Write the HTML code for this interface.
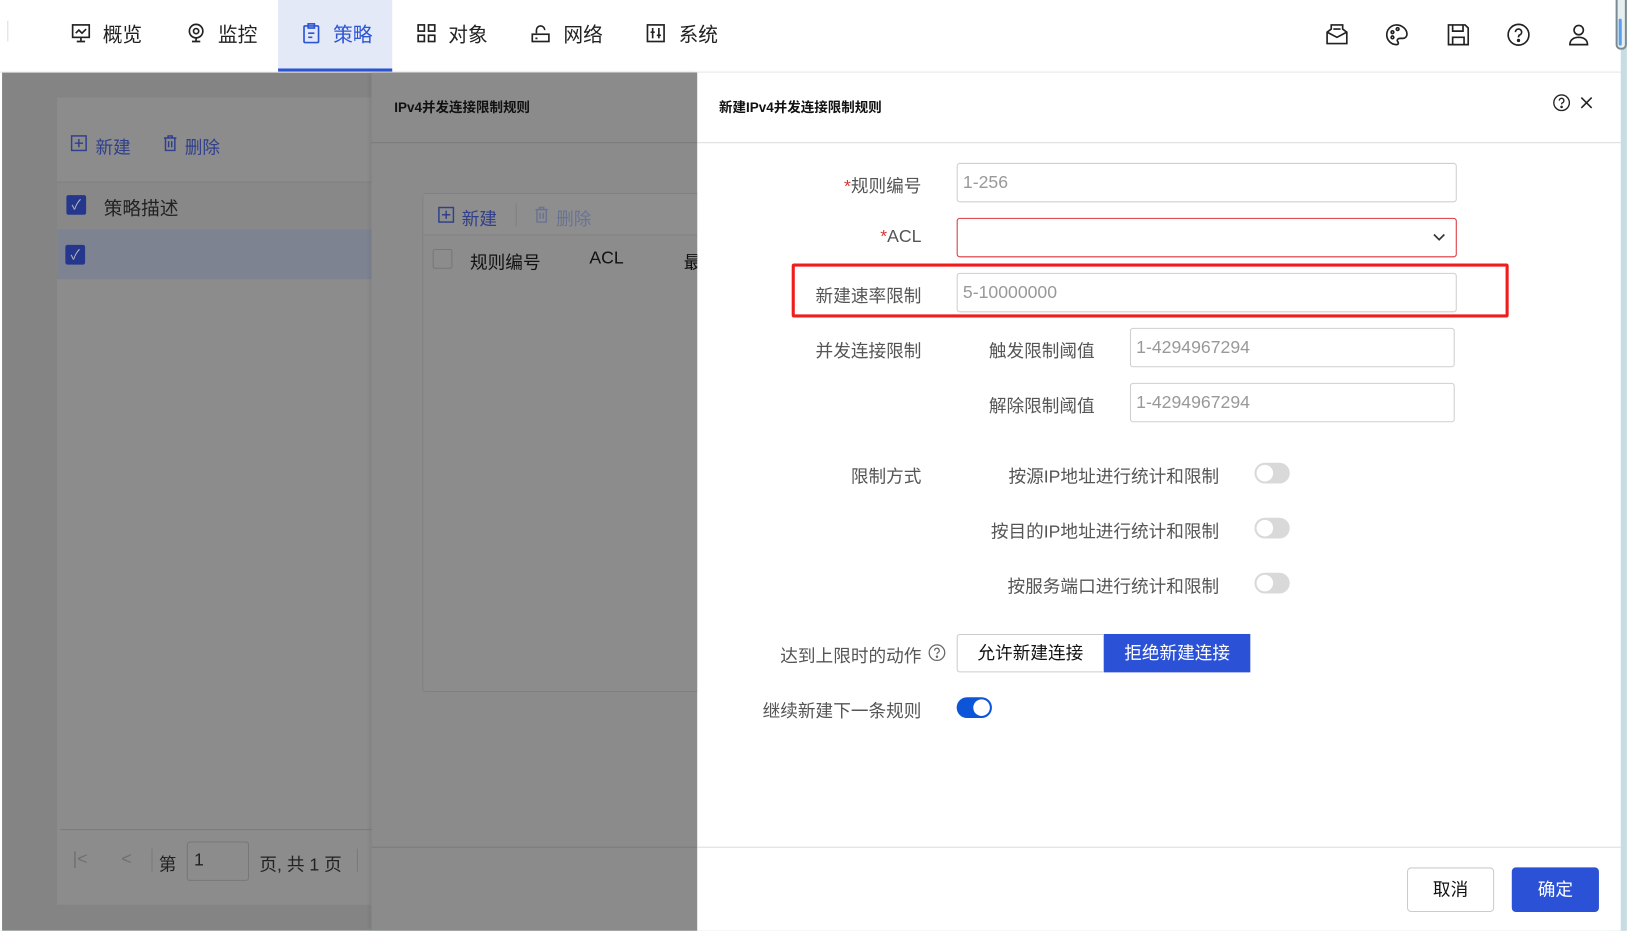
<!DOCTYPE html>
<html><head><meta charset="utf-8"><style>
*{box-sizing:border-box;margin:0;padding:0}
html,body{width:1627px;height:931px;overflow:hidden;background:#c8dde2;font-family:"Liberation Sans","Noto Sans CJK SC",sans-serif}
#w{position:absolute;left:0;top:0;width:1568px;height:897px;transform:scale(1.0376);transform-origin:0 0;background:#fff;overflow:hidden}
.a{position:absolute}
.nav{font-size:19px;color:#222;top:19px}
.ni{position:absolute;top:22px}
.ov{position:absolute;left:2px;top:70px;width:670px;height:827px;background:#848484}
.lbl{position:absolute;font-size:17px;color:#555;text-align:right;white-space:nowrap;margin-top:-1px}
.inp{position:absolute;border:1px solid #cfcfcf;border-radius:3px;background:#fff;font-size:17px;color:#999;padding:8px 5px;line-height:20px}
.tg{position:absolute;width:34px;height:20px;border-radius:10px;background:#d9d9d9}
.tg::after{content:"";position:absolute;left:2px;top:2px;width:16px;height:16px;border-radius:50%;background:#fff}
</style></head><body><div id="w">
<div class="a" style="left:0;top:0;width:1568px;height:70px;background:#fff;border-bottom:1px solid #e4e4e4"></div>
<div class="a" style="left:7px;top:20px;width:1px;height:20px;background:#ddd"></div>
<div class="a" style="left:268px;top:0;width:110px;height:69px;background:#e4e9f8;border-bottom:3px solid #2c55d4"></div>
<svg class="ni" style="left:68px" width="20" height="20" viewBox="0 0 20 20" fill="none" stroke="#222" stroke-width="1.6"><rect x="2" y="2" width="16" height="12"/><path d="M5 10l3-3 3 3 4-4M10 14v4M6 18h8"/></svg>
<div class="a nav" style="left:99px">概览</div>
<svg class="ni" style="left:179px" width="20" height="20" viewBox="0 0 20 20" fill="none" stroke="#222" stroke-width="1.6"><circle cx="10" cy="8" r="6.5"/><circle cx="10" cy="8" r="2.5"/><path d="M10 15v3M6 18h8"/></svg>
<div class="a nav" style="left:210px">监控</div>
<svg class="ni" style="left:290px" width="20" height="20" viewBox="0 0 20 20" fill="none" stroke="#2c55d4" stroke-width="1.6"><rect x="3" y="3" width="14" height="16" rx="1"/><rect x="7" y="1" width="6" height="4"/><path d="M7 10h6M7 14h4"/></svg>
<div class="a nav" style="left:321px;color:#2c55d4">策略</div>
<svg class="ni" style="left:401px" width="20" height="20" viewBox="0 0 20 20" fill="none" stroke="#222" stroke-width="1.6"><rect x="2" y="2" width="6" height="6"/><rect x="12" y="2" width="6" height="6"/><rect x="2" y="12" width="6" height="6"/><rect x="12" y="12" width="6" height="6"/></svg>
<div class="a nav" style="left:432px">对象</div>
<svg class="ni" style="left:511px" width="20" height="20" viewBox="0 0 20 20" fill="none" stroke="#222" stroke-width="1.6"><path d="M6 10V7a4 4 0 0 1 8 0"/><rect x="2" y="11" width="16" height="7"/><path d="M5 15h2"/></svg>
<div class="a nav" style="left:543px">网络</div>
<svg class="ni" style="left:622px" width="20" height="20" viewBox="0 0 20 20" fill="none" stroke="#222" stroke-width="1.6"><rect x="2" y="2" width="16" height="16"/><path d="M7 5v10M13 5v10M5 9h4M11 12h4"/></svg>
<div class="a nav" style="left:654px">系统</div>
<svg class="a" style="left:1277px;top:22px" width="23" height="23" viewBox="0 0 23 23" fill="none" stroke="#222" stroke-width="1.6"><path d="M2 9l4-3V2h11v4l4 3v11H2z"/><path d="M2 9l9.5 5L21 9M8 6h7"/></svg>
<svg class="a" style="left:1335px;top:22px" width="23" height="23" viewBox="0 0 23 23" fill="none" stroke="#222" stroke-width="1.6"><path d="M11 2a9 9 0 1 0 0 19c2 0 2-2 1-3s0-3 2-3h3a4 4 0 0 0 4-4C21 6 16 2 11 2z"/><circle cx="7" cy="9" r="1.3"/><circle cx="12" cy="6" r="1.3"/><circle cx="7" cy="14" r="1.3"/></svg>
<svg class="a" style="left:1394px;top:22px" width="23" height="23" viewBox="0 0 23 23" fill="none" stroke="#222" stroke-width="1.6"><path d="M2 2h16l3 3v16H2z"/><path d="M6 2v6h10V2M6 21v-7h11v7"/></svg>
<svg class="a" style="left:1452px;top:22px" width="23" height="23" viewBox="0 0 23 23" fill="none" stroke="#222" stroke-width="1.6"><circle cx="11.5" cy="11.5" r="10"/><path d="M8.5 9a3 3 0 1 1 4 2.8c-1 .4-1 1-1 2.2"/><circle cx="11.5" cy="17" r=".8" fill="#222"/></svg>
<svg class="a" style="left:1510px;top:22px" width="23" height="23" viewBox="0 0 23 23" fill="none" stroke="#222" stroke-width="1.6"><circle cx="11.5" cy="7" r="4.5"/><path d="M3 21c0-5 4-7 8.5-7s8.5 2 8.5 7z"/></svg>

<div class="ov"></div>
<div class="a" style="left:55px;top:94px;width:303px;height:778px;background:#8c8c8c"></div>
<svg class="a" style="left:68px;top:130px" width="16" height="16" viewBox="0 0 16 16" fill="none" stroke="#2f3f8a" stroke-width="1.4"><rect x="1" y="1" width="14" height="14"/><path d="M8 4v8M4 8h8"/></svg>
<div class="a" style="left:92px;top:128px;font-size:17px;color:#2f3f8a">新建</div>
<svg class="a" style="left:156px;top:130px" width="16" height="16" viewBox="0 0 16 16" fill="none" stroke="#2f3f8a" stroke-width="1.4"><path d="M2 3h12M6 3V1h4v2M3.5 3v12h9V3M6.5 6v6M9.5 6v6"/></svg>
<div class="a" style="left:178px;top:128px;font-size:17px;color:#2f3f8a">删除</div>
<div class="a" style="left:55px;top:175px;width:303px;height:46px;background:#888;border-top:1px solid #808080"></div>
<div class="a" style="left:64px;top:188px;width:19px;height:19px;background:#24378d;border-radius:2px;color:#bbb;font-size:13px;text-align:center;line-height:19px">✓</div>
<div class="a" style="left:100px;top:187px;font-size:18px;color:#222">策略描述</div>
<div class="a" style="left:55px;top:221px;width:303px;height:48px;background:#7e8392"></div>
<div class="a" style="left:63px;top:236px;width:19px;height:19px;background:#24378d;border-radius:2px;color:#bbb;font-size:13px;text-align:center;line-height:19px">✓</div>
<div class="a" style="left:58px;top:799px;width:300px;height:1px;background:#7c7c7c"></div>
<div class="a" style="left:70px;top:818px;font-size:17px;color:#6f6f6f">|&lt;</div>
<div class="a" style="left:117px;top:818px;font-size:17px;color:#6f6f6f">&lt;</div>
<div class="a" style="left:146px;top:818px;width:1px;height:22px;background:#7a7a7a"></div>
<div class="a" style="left:153px;top:819px;font-size:17px;color:#222">第</div>
<div class="a" style="left:180px;top:811px;width:60px;height:38px;border:1px solid #777;border-radius:3px;font-size:17px;color:#222;padding:7px 6px">1</div>
<div class="a" style="left:250px;top:819px;font-size:17px;color:#222">页, 共 1 页</div>
<div class="a" style="left:344px;top:818px;width:1px;height:22px;background:#7a7a7a"></div>
<div class="a" style="left:358px;top:70px;width:314px;height:827px;background:#8b8b8b;box-shadow:-2px 0 4px rgba(0,0,0,.08)"></div>
<div class="a" style="left:380px;top:93px;font-size:13px;font-weight:bold;color:#111">IPv4并发连接限制规则</div>
<div class="a" style="left:358px;top:137px;width:314px;height:1px;background:#7a7a7a"></div>
<div class="a" style="left:358px;top:816px;width:314px;height:1px;background:#7a7a7a"></div>
<div class="a" style="left:407px;top:186px;width:270px;height:481px;border:1px solid #808080;border-radius:3px;background:#8c8c8c"></div>
<div class="a" style="left:408px;top:187px;width:264px;height:40px;background:#8e8e8e;border-bottom:1px solid #818181"></div>
<svg class="a" style="left:422px;top:199px" width="16" height="16" viewBox="0 0 16 16" fill="none" stroke="#2f3f8a" stroke-width="1.4"><rect x="1" y="1" width="14" height="14"/><path d="M8 4v8M4 8h8"/></svg>
<div class="a" style="left:445px;top:197px;font-size:17px;color:#2f3f8a">新建</div>
<div class="a" style="left:497px;top:196px;width:1px;height:22px;background:#7e7e7e"></div>
<svg class="a" style="left:514px;top:199px" width="16" height="16" viewBox="0 0 16 16" fill="none" stroke="#6a7394" stroke-width="1.4"><path d="M2 3h12M6 3V1h4v2M3.5 3v12h9V3M6.5 6v6M9.5 6v6"/></svg>
<div class="a" style="left:536px;top:197px;font-size:17px;color:#6a7394">删除</div>
<div class="a" style="left:417px;top:240px;width:19px;height:19px;border:1px solid #777;border-radius:2px"></div>
<div class="a" style="left:453px;top:239px;font-size:17px;color:#111">规则编号</div>
<div class="a" style="left:568px;top:239px;font-size:17px;color:#111">ACL</div>
<div class="a" style="left:659px;top:239px;font-size:17px;color:#111">最</div>

<div class="a" style="left:672px;top:70px;width:890px;height:827px;background:#fff;border-radius:0 0 8px 0"></div>
<div class="a" style="left:693px;top:93px;font-size:13px;font-weight:bold;color:#111">新建IPv4并发连接限制规则</div>
<svg class="a" style="left:1496px;top:90px" width="18" height="18" viewBox="0 0 18 18" fill="none" stroke="#222" stroke-width="1.3"><circle cx="9" cy="9" r="7.5"/><path d="M6.8 7a2.2 2.2 0 1 1 3 2c-.7.3-.8.7-.8 1.6"/><circle cx="9" cy="13" r=".6" fill="#222"/></svg>
<svg class="a" style="left:1522px;top:92px" width="14" height="14" viewBox="0 0 14 14" stroke="#222" stroke-width="1.5"><path d="M2 2l10 10M12 2L2 12"/></svg>
<div class="a" style="left:672px;top:137px;width:890px;height:1px;background:#ddd"></div>

<div class="lbl" style="right:680px;top:166px"><span style="color:#d33">*</span>规则编号</div>
<div class="inp" style="left:922px;top:157px;width:482px;height:38px">1-256</div>
<div class="lbl" style="right:680px;top:219px"><span style="color:#d33">*</span>ACL</div>
<div class="inp" style="left:922px;top:210px;width:482px;height:38px;border-color:#d9363e"></div>
<svg class="a" style="left:1380px;top:223px" width="14" height="12" viewBox="0 0 14 12" fill="none" stroke="#333" stroke-width="1.6"><path d="M2 3l5 5 5-5"/></svg>
<div class="a" style="left:763px;top:254px;width:691px;height:52px;border:3px solid #f01d1d;border-radius:2px"></div>
<div class="lbl" style="right:680px;top:272px">新建速率限制</div>
<div class="inp" style="left:922px;top:263px;width:482px;height:38px">5-10000000</div>
<div class="lbl" style="right:680px;top:325px">并发连接限制</div>
<div class="lbl" style="right:513px;top:325px">触发限制阈值</div>
<div class="inp" style="left:1089px;top:316px;width:313px;height:38px">1-4294967294</div>
<div class="lbl" style="right:513px;top:378px">解除限制阈值</div>
<div class="inp" style="left:1089px;top:369px;width:313px;height:38px">1-4294967294</div>

<div class="lbl" style="right:680px;top:446px">限制方式</div>
<div class="lbl" style="right:393px;top:446px">按源IP地址进行统计和限制</div>
<div class="tg" style="left:1209px;top:446px"></div>
<div class="lbl" style="right:393px;top:499px">按目的IP地址进行统计和限制</div>
<div class="tg" style="left:1209px;top:499px"></div>
<div class="lbl" style="right:393px;top:552px">按服务端口进行统计和限制</div>
<div class="tg" style="left:1209px;top:552px"></div>

<div class="lbl" style="right:680px;top:619px">达到上限时的动作</div>
<svg class="a" style="left:894px;top:620px" width="18" height="18" viewBox="0 0 18 18" fill="none" stroke="#666" stroke-width="1.2"><circle cx="9" cy="9" r="7.5"/><path d="M6.8 7a2.2 2.2 0 1 1 3 2c-.7.3-.8.7-.8 1.6"/><circle cx="9" cy="13" r=".6" fill="#666"/></svg>
<div class="a" style="left:922px;top:611px;width:142px;height:37px;border:1px solid #ccc;border-radius:3px 0 0 3px;font-size:17px;color:#111;text-align:center;line-height:35px">允许新建连接</div>
<div class="a" style="left:1064px;top:611px;width:141px;height:37px;background:#2b51d6;font-size:17px;color:#fff;text-align:center;line-height:37px">拒绝新建连接</div>
<div class="lbl" style="right:680px;top:672px">继续新建下一条规则</div>
<div class="a" style="left:922px;top:672px;width:34px;height:20px;border-radius:10px;background:#0c55d8"><div style="position:absolute;left:16px;top:2px;width:16px;height:16px;border-radius:50%;background:#fff"></div></div>

<div class="a" style="left:672px;top:816px;width:890px;height:1px;background:#ddd"></div>
<div class="a" style="left:1356px;top:836px;width:84px;height:43px;border:1px solid #ccc;border-radius:4px;font-size:17px;color:#111;text-align:center;line-height:41px">取消</div>
<div class="a" style="left:1457px;top:836px;width:84px;height:43px;background:#2b51d6;border-radius:4px;font-size:17px;color:#fff;text-align:center;line-height:43px">确定</div>

<div class="a" style="left:1562px;top:0;width:6px;height:897px;background:#c8dde2"></div>
<div class="a" style="left:1557px;top:0;width:11px;height:48px;border:2px solid #7a8a90;border-top:none;border-radius:0 0 5px 5px;background:#e6eef0"></div>
<div class="a" style="left:1560px;top:18px;width:3px;height:26px;background:#5aa0f0;border-radius:2px"></div>
</div></body></html>
